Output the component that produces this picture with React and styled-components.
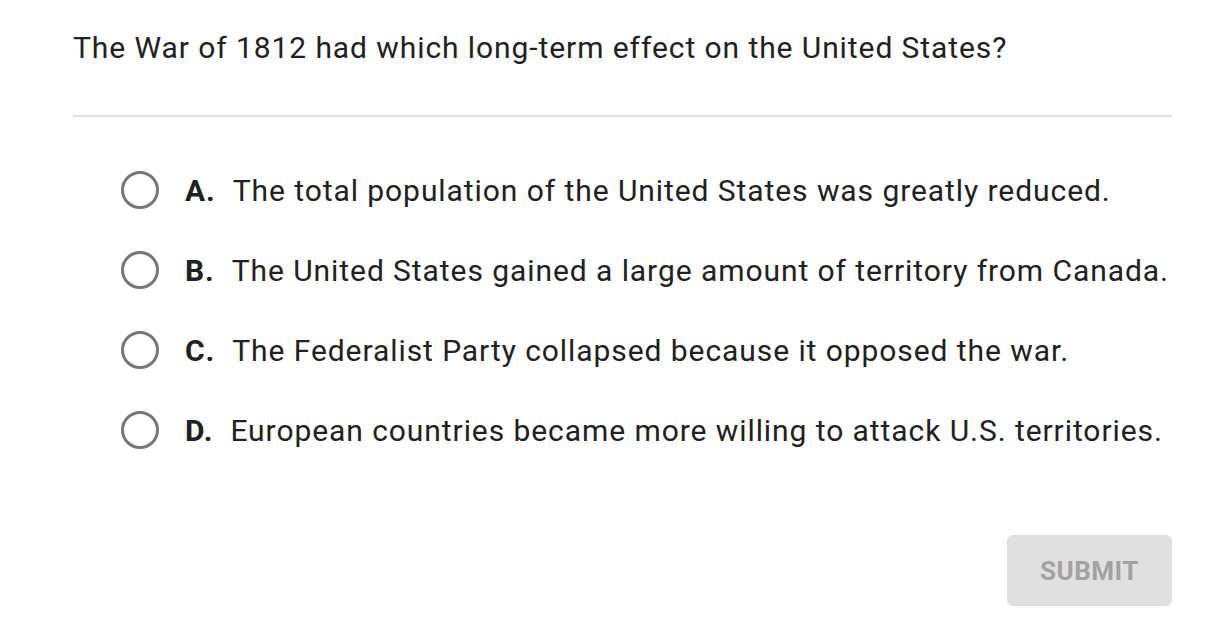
import React from 'react';
import styled, { createGlobalStyle } from 'styled-components';

const GlobalStyle = createGlobalStyle`
  html, body {
    margin: 0;
    padding: 0;
    background: #fff;
  }
  body {
    font-family: Roboto, "Liberation Sans", sans-serif;
    color: #212121;
  }
`;

const Page = styled.div`
  width: 1209px;
  height: 638px;
  box-sizing: border-box;
  padding: 28px 37px 0 73px;
  display: flex;
  flex-direction: column;
`;

const Question = styled.div`
  font-size: 30px;
  line-height: 40px;
  letter-spacing: 0.92px;
  padding-bottom: 47px;
  border-bottom: 2px solid #e0e0e0;
`;

const Options = styled.ul`
  list-style: none;
  margin: 0;
  padding: 53px 0 0 48px;
  display: flex;
  flex-direction: column;
  gap: 40px;
`;

const Option = styled.li`
  display: flex;
  align-items: center;
  height: 40px;
  font-size: 30px;
  letter-spacing: 0.93px;
  cursor: pointer;
`;

const Radio = styled.span`
  width: 38px;
  height: 38px;
  box-sizing: border-box;
  border-radius: 50%;
  border: 3px solid #777;
  margin-right: 26px;
  flex-shrink: 0;
`;

const Letter = styled.span`
  font-weight: 700;
  margin-right: 17px;
`;

const Footer = styled.div`
  display: flex;
  justify-content: flex-end;
  margin-top: 85px;
`;

const SubmitButton = styled.button`
  width: 165px;
  height: 71px;
  border: none;
  border-radius: 6px;
  background: #e0e0e0;
  color: #a2a2a2;
  font-family: Roboto, "Liberation Sans", sans-serif;
  font-size: 26px;
  font-weight: 700;
  letter-spacing: 0.5px;
`;

const answers = [
  { letter: 'A.', text: 'The total population of the United States was greatly reduced.' },
  { letter: 'B.', text: 'The United States gained a large amount of territory from Canada.' },
  { letter: 'C.', text: 'The Federalist Party collapsed because it opposed the war.' },
  { letter: 'D.', text: 'European countries became more willing to attack U.S. territories.' },
];

export default function App() {
  return (
    <>
      <GlobalStyle />
      <Page>
        <Question>The War of 1812 had which long-term effect on the United States?</Question>
        <Options>
          {answers.map((a) => (
            <Option key={a.letter}>
              <Radio />
              <Letter>{a.letter}</Letter>
              <span>{a.text}</span>
            </Option>
          ))}
        </Options>
        <Footer>
          <SubmitButton disabled>SUBMIT</SubmitButton>
        </Footer>
      </Page>
    </>
  );
}
